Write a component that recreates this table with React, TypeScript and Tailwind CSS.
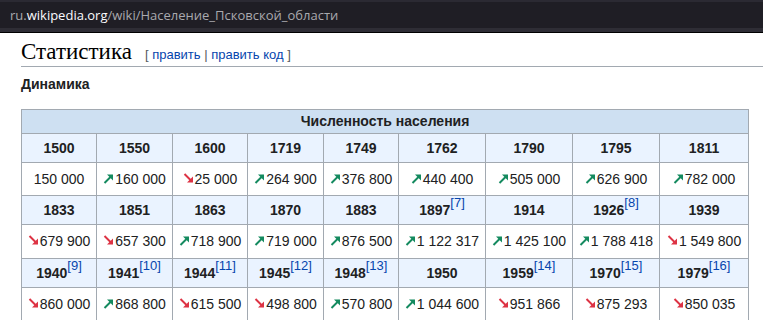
import React from "react";

type Cell = { v: string; t?: "up" | "down"; };

const Up = () => (
  <svg width="11" height="11" viewBox="0 0 11 11" className="inline-block align-baseline mr-[1px]">
    <path d="M1.5 10 L9 2.5" stroke="#148a5f" strokeWidth="2" strokeLinecap="butt" />
    <path d="M4 1.5 L10 1.5 L10 7.5 Z" fill="#148a5f" />
  </svg>
);
const Down = () => (
  <svg width="11" height="11" viewBox="0 0 11 11" className="inline-block align-baseline mr-[1px]">
    <path d="M1.5 1 L9 8.5" stroke="#dd3344" strokeWidth="2" strokeLinecap="butt" />
    <path d="M4 9.5 L10 9.5 L10 3.5 Z" fill="#dd3344" />
  </svg>
);

const years1: [string, string?][] = [["1500"], ["1550"], ["1600"], ["1719"], ["1749"], ["1762"], ["1790"], ["1795"], ["1811"]];
const vals1: Cell[] = [
  { v: "150 000" }, { v: "160 000", t: "up" }, { v: "25 000", t: "down" }, { v: "264 900", t: "up" },
  { v: "376 800", t: "up" }, { v: "440 400", t: "up" }, { v: "505 000", t: "up" }, { v: "626 900", t: "up" }, { v: "782 000", t: "up" },
];
const years2: [string, string?][] = [["1833"], ["1851"], ["1863"], ["1870"], ["1883"], ["1897", "7"], ["1914"], ["1926", "8"], ["1939"]];
const vals2: Cell[] = [
  { v: "679 900", t: "down" }, { v: "657 300", t: "down" }, { v: "718 900", t: "up" }, { v: "719 000", t: "up" },
  { v: "876 500", t: "up" }, { v: "1 122 317", t: "up" }, { v: "1 425 100", t: "up" }, { v: "1 788 418", t: "up" }, { v: "1 549 800", t: "down" },
];
const years3: [string, string?][] = [["1940", "9"], ["1941", "10"], ["1944", "11"], ["1945", "12"], ["1948", "13"], ["1950"], ["1959", "14"], ["1970", "15"], ["1979", "16"]];
const vals3: Cell[] = [
  { v: "860 000", t: "down" }, { v: "868 800", t: "up" }, { v: "615 500", t: "down" }, { v: "498 800", t: "down" },
  { v: "570 800", t: "up" }, { v: "1 044 600", t: "up" }, { v: "951 866", t: "down" }, { v: "875 293", t: "down" }, { v: "850 035", t: "down" },
];

const widths = [75, 76, 75, 76, 75, 87, 87, 87, 89];

function YearRow({ ys }: { ys: [string, string?][] }) {
  return (
    <tr className="bg-[#eaf3ff] h-[29px]">
      {ys.map(([y, n], i) => (
        <th key={i} className="border border-[#a2a9b1] font-bold text-center p-0 leading-[20px] whitespace-nowrap">
          {y}
          {n && <sup className="font-normal text-[#0645ad] text-[13px] top-[-0.6em]">[{n}]</sup>}
        </th>
      ))}
    </tr>
  );
}

function ValRow({ vs, h }: { vs: Cell[]; h: string }) {
  return (
    <tr className={`bg-white ${h}`}>
      {vs.map((c, i) => (
        <td key={i} className="border border-[#a2a9b1] text-center p-0 whitespace-nowrap">
          {c.t === "up" && <Up />}
          {c.t === "down" && <Down />}
          {c.v}
        </td>
      ))}
    </tr>
  );
}

export default function App() {
  return (
    <div className="w-[763px] h-[320px] overflow-hidden bg-white" style={{ fontFamily: "'Liberation Sans', Arial, sans-serif" }}>
      <div className="h-[33px] bg-[#1f1e25] flex flex-col">
        <div className="h-[2px] bg-[#2b2a33]" />
        <div className="h-[26px] flex items-center pl-[10px] pt-[1px] text-[13px] text-[#a9a9ae]" style={{ fontFamily: "'Open Sans', 'Noto Sans', sans-serif" }}>
          <span>ru.</span><span className="text-[#fbfbfe]">wikipedia.org</span><span>/wiki/Население_Псковской_области</span>
        </div>
        <div className="h-[4px] bg-[#2e2d35]" />
        <div className="h-[1px] bg-black" />
      </div>
      <div className="pl-[21px]">
        <div className="flex items-baseline border-b border-[#a2a9b1] h-[34px] pt-[4px]">
          <span className="text-[23px] text-black leading-[30px]" style={{ fontFamily: "'Liberation Serif', Georgia, serif" }}>Статистика</span>
          <span className="text-[13px] ml-[13px] text-[#54595d]">
            [ <span className="text-[#0645ad]">править</span> | <span className="text-[#0645ad]">править код</span> ]
          </span>
        </div>
        <div className="text-[14px] font-bold text-[#202122] mt-[9px] leading-[17px]">Динамика</div>
        <table className="table-fixed border-collapse border border-[#a2a9b1] mt-[16px] text-[14px] text-[#202122]" style={{ width: 728 }}>
          <colgroup>
            {widths.map((w, i) => <col key={i} style={{ width: w }} />)}
          </colgroup>
          <tbody>
            <tr className="bg-[#cee0f2] h-[24px]">
              <th colSpan={9} className="border border-[#a2a9b1] font-bold text-center p-0">Численность населения</th>
            </tr>
            <YearRow ys={years1} />
            <ValRow vs={vals1} h="h-[33px]" />
            <YearRow ys={years2} />
            <ValRow vs={vals2} h="h-[34px]" />
            <YearRow ys={years3} />
            <ValRow vs={vals3} h="h-[34px]" />
          </tbody>
        </table>
      </div>
    </div>
  );
}
